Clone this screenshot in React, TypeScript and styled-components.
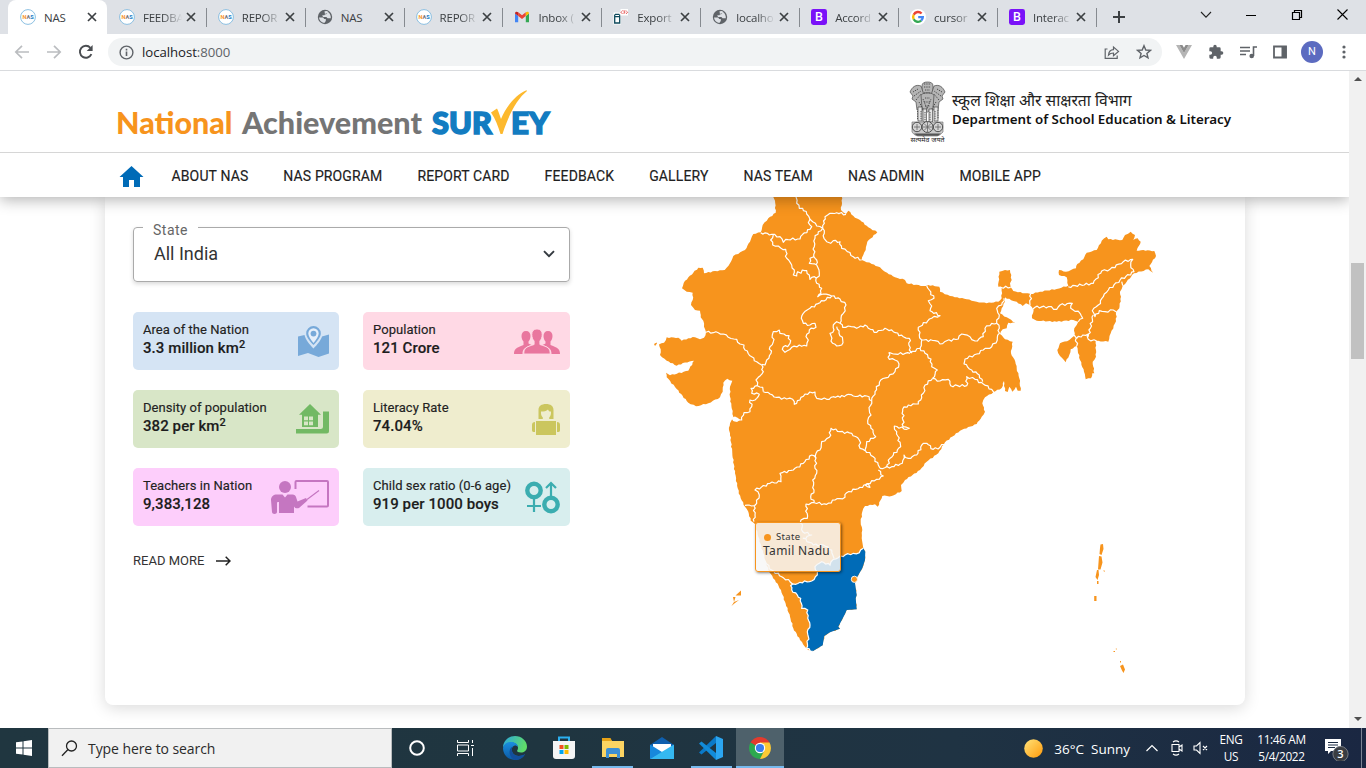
import React from "react";
import styled, { createGlobalStyle } from "styled-components";

const GlobalStyle = createGlobalStyle`
  * { box-sizing: border-box; }
  body { margin: 0; width: 1366px; height: 768px; overflow: hidden; background: #fff; font-family: Roboto, "Liberation Sans", sans-serif; }
  svg { display: block; flex: none; }
`;

const ORANGE = "#f7941d";
const BLUE = "#006bb7";

const Screen = styled.div`
  display: flex;
  flex-direction: column;
  width: 1366px;
  height: 768px;
`;

/* ---------- browser chrome ---------- */

const TabStrip = styled.div`
  display: flex;
  height: 34px;
  padding-left: 8px;
  background: #dee1e6;
  font-family: "Open Sans", "Noto Sans", sans-serif;
`;

const Tab = styled.div<{ $active?: boolean; $line?: boolean }>`
  position: relative;
  display: flex;
  align-items: center;
  width: 98.9px;
  height: 34px;
  padding: 0 10px 0 12px;
  border-radius: 8px 8px 0 0;
  background: ${(p) => (p.$active ? "#fff" : "transparent")};
  &::after {
    content: "";
    position: absolute;
    right: -1px;
    top: 8px;
    width: 1px;
    height: 19px;
    background: ${(p) => (p.$line ? "#868a90" : "transparent")};
  }
`;

const TabTitle = styled.span<{ $fade?: boolean }>`
  flex: 1;
  margin: 0 3px 0 8px;
  overflow: hidden;
  white-space: nowrap;
  font-size: 11.5px;
  letter-spacing: -0.2px;
  color: #3c4043;
  ${(p) => p.$fade && "-webkit-mask-image: linear-gradient(90deg, #000 50%, transparent 98%);"}
`;

const WindowButtons = styled.div`
  display: flex;
  align-items: center;
  margin-left: auto;
  padding-right: 18px;
  gap: 34px;
  height: 29px;
`;

const NewTab = styled.div`
  display: flex;
  align-items: center;
  padding-left: 17px;
`;

const Toolbar = styled.div`
  display: flex;
  align-items: center;
  height: 37px;
  padding: 0 15px 0 14px;
  border-bottom: 1px solid #d9dbde;
  background: #fff;
`;

const NavIcons = styled.div`
  display: flex;
  align-items: center;
  gap: 16px;
  width: 94px;
`;

const AddressBar = styled.div`
  display: flex;
  align-items: center;
  width: 1054px;
  height: 28px;
  padding: 0 10px 0 11px;
  border-radius: 14px;
  background: #f1f3f4;
`;

const Url = styled.span`
  flex: 1;
  margin-left: 8px;
  font-family: "Open Sans", "Noto Sans", sans-serif;
  font-size: 13.2px;
  letter-spacing: -0.05px;
  color: #202124;
  span { color: #5f6368; }
`;

const Extensions = styled.div`
  display: flex;
  align-items: center;
  margin-left: auto;
  gap: 16px;
`;

const Avatar = styled.div`
  width: 22px;
  height: 22px;
  margin: 0 -2px 0 -2px;
  border-radius: 50%;
  background: #5c6bc0;
  color: #fff;
  font-size: 11px;
  line-height: 22px;
  text-align: center;
`;

/* ---------- page ---------- */

const Viewport = styled.div`
  display: flex;
  height: 657px;
`;

const Page = styled.div`
  display: flex;
  flex-direction: column;
  width: 1349px;
  overflow: hidden;
`;

const Scrollbar = styled.div`
  display: flex;
  flex-direction: column;
  align-items: center;
  justify-content: space-between;
  width: 17px;
  padding: 6px 0 7px;
  background: #f1f1f1;
`;

const Thumb = styled.div`
  width: 13px;
  height: 96px;
  margin-bottom: 176px;
  background: #c1c1c1;
`;

const Arrow = styled.div<{ $down?: boolean }>`
  border: 4px solid transparent;
  border-${(p) => (p.$down ? "top" : "bottom")}: 4px solid #505050;
  border-${(p) => (p.$down ? "bottom" : "top")}: 0;
`;

const Header = styled.header`
  position: relative;
  z-index: 1;
  height: 126px;
  background: #fff;
  box-shadow: 0 3px 14px rgba(0, 0, 0, 0.3);
`;

const Brand = styled.div`
  display: flex;
  justify-content: space-between;
  height: 82px;
  padding: 0 117px 0 110px;
  border-bottom: 1px solid #d6d6d6;
`;

const Department = styled.div`
  display: flex;
  gap: 6px;
  padding-top: 10px;
`;

const DeptText = styled.div`
  width: 280px;
  padding-top: 9px;
  color: #111;
  white-space: nowrap;
`;

const Hindi = styled.div`
  height: 20px;
  font-family: "Noto Sans Devanagari", "Noto Sans", sans-serif;
  font-size: 15.7px;
  line-height: 24px;
  color: #222;
`;

const English = styled.div`
  font-family: "Noto Sans", "Open Sans", sans-serif;
  font-size: 13.35px;
  font-weight: 600;
  line-height: 19px;
`;

const Menu = styled.nav`
  display: flex;
  align-items: center;
  gap: 35px;
  height: 44px;
  padding: 2px 0 0 119px;
`;

const MenuItem = styled.span`
  font-size: 14px;
  font-weight: 400;
  letter-spacing: 0.13px;
  color: #212121;
  -webkit-text-stroke: 0.15px #212121;
  white-space: nowrap;
`;

const HomeIcon = styled.svg`
  margin-right: -7.5px;
`;

const Card = styled.main`
  display: flex;
  width: 1140px;
  height: 508px;
  margin-left: 105px;
  border-radius: 0 0 8px 8px;
  background: #fff;
  box-shadow: 0 3px 16px rgba(0, 0, 0, 0.15);
`;

const Facts = styled.section`
  width: 465px;
  padding: 30px 0 0 28px;
`;

const Select = styled.div`
  position: relative;
  display: flex;
  align-items: center;
  justify-content: space-between;
  height: 55px;
  padding: 0 14px 2px 20px;
  border: 1px solid #aaa;
  border-radius: 4px;
  box-shadow: 0 2px 4px rgba(0, 0, 0, 0.15);
  color: #333;
  font-size: 18px;
`;

const SelectLabel = styled.span`
  position: absolute;
  left: 9px;
  top: -7px;
  padding: 0 10px;
  background: #fff;
  color: #666;
  font-size: 14px;
  line-height: 18px;
  letter-spacing: 0.5px;
`;

const FactGrid = styled.div`
  display: grid;
  grid-template-columns: 206px 207px;
  grid-auto-rows: 58px;
  gap: 20px 24px;
  margin-top: 30px;
`;

const Fact = styled.div<{ $bg: string }>`
  display: flex;
  align-items: center;
  justify-content: space-between;
  padding: 0 10px;
  border-radius: 5px;
  background: ${(p) => p.$bg};
`;

const FactText = styled.div`
  padding-bottom: 3px;
  white-space: nowrap;
  color: #1d1d1d;
`;

const FactName = styled.div`
  font-size: 13px;
  letter-spacing: 0.05px;
  line-height: 18px;
  color: #222;
  -webkit-text-stroke: 0.15px #222;
`;

const FactValue = styled.div`
  font-size: 15px;
  font-weight: 500;
  letter-spacing: 0.08px;
  line-height: 19px;
  -webkit-text-stroke: 0.15px #1d1d1d;
  sup { font-size: 11px; line-height: 0; vertical-align: 5px; }
`;

const ReadMore = styled.div`
  display: flex;
  align-items: center;
  gap: 12px;
  margin-top: 26px;
  font-size: 13px;
  line-height: 18px;
  color: #333;
`;

const MapPanel = styled.section`
  position: relative;
  flex: 1;
  padding-left: 70px;
`;

const Tooltip = styled.div`
  position: absolute;
  left: 185px;
  top: 325px;
  width: 86px;
  height: 50px;
  padding: 7px 7px;
  border: 1px solid ${ORANGE};
  border-radius: 3px;
  background: rgba(247, 247, 247, 0.85);
  box-shadow: 1px 1px 3px rgba(0, 0, 0, 0.5);
  color: #333;
  font-family: "Noto Sans", "Open Sans", sans-serif;
  font-size: 12px;
  letter-spacing: 0.35px;
  line-height: 14px;
  white-space: nowrap;
`;

const TooltipHead = styled.div`
  display: flex;
  align-items: center;
  gap: 5px;
  padding-left: 1px;
  font-size: 9.5px;
  &::before {
    content: "";
    width: 7px;
    height: 7px;
    border-radius: 50%;
    background: ${ORANGE};
  }
`;

/* ---------- taskbar ---------- */

const Taskbar = styled.footer`
  display: flex;
  height: 40px;
  background: linear-gradient(90deg, #203640 0%, #1f3540 40%, #1f3343 70%, #1a2742 100%);
  color: #fff;
  font-family: "Open Sans", "Noto Sans", sans-serif;
`;

const StartButton = styled.div`
  display: grid;
  place-items: center;
  width: 48px;
`;

const SearchBox = styled.div`
  display: flex;
  align-items: center;
  gap: 10px;
  width: 344px;
  padding-left: 12px;
  border: 1px solid #b9bcbe;
  background: #f1f1f1;
  color: #2b2b2b;
  font-size: 14px;
  letter-spacing: -0.08px;
`;

const TaskButton = styled.div<{ $open?: boolean; $current?: boolean }>`
  position: relative;
  display: grid;
  place-items: center;
  width: ${(p) => (p.$current ? 48 : 49.1)}px;
  background: ${(p) => (p.$current ? "#4e616b" : "transparent")};
  &::after {
    content: "";
    position: absolute;
    bottom: 0;
    left: ${(p) => (p.$current ? 0 : 4)}px;
    right: ${(p) => (p.$current ? 0 : 4)}px;
    height: 2px;
    background: ${(p) => (p.$open ? "#76b9ed" : "transparent")};
  }
`;

const Tray = styled.div`
  display: flex;
  align-items: center;
  margin-left: auto;
  padding-right: 4px;
`;

const Weather = styled.span`
  margin: 2px 16px 0 11px;
  font-size: 13.5px;
  white-space: pre;
`;

const TrayStack = styled.div<{ $w: number }>`
  width: ${(p) => p.$w}px;
  font-size: 11.8px;
  letter-spacing: -0.35px;
  line-height: 17px;
  text-align: center;
  white-space: nowrap;
`;

const ShowDesktop = styled.div`
  width: 1px;
  height: 40px;
  margin-left: 10px;
  background: #7b8494;
`;

/* ---------- small icons ---------- */

type Kind = "nas" | "globe" | "gmail" | "export" | "boot" | "google";

const Favicon = ({ kind }: { kind: Kind }) => {
  if (kind === "nas")
    return (
      <svg width="16" height="16" viewBox="0 0 16 16">
        <circle cx="8" cy="8" r="7.4" fill="#fff" stroke="#7fb9df" strokeWidth=".9" />
        <text x="2.4" y="10" fontSize="5.6" fontWeight="700" fontFamily="Roboto, sans-serif">
          <tspan fill={ORANGE}>N</tspan><tspan fill="#777">A</tspan><tspan fill="#1479c4">S</tspan>
        </text>
      </svg>
    );
  if (kind === "globe")
    return (
      <svg width="16" height="16" viewBox="0 0 16 16">
        <circle cx="8" cy="8" r="7.2" fill="#5f6368" />
        <path d="M2 8.5h4.2l1 1.6h1.6v1.8L7.3 14C4 13.6 2.2 11 2 8.5ZM7.5 2.2 10 1.9l1.3 1-1 1.6H8.6L7.4 6.2H5.2L6 8h3.4l1.2 1.2h3.2c.4-3-1.4-5.2-2.5-6L9.8 5 8 5.4Z" fill="#dee1e6" />
      </svg>
    );
  if (kind === "gmail")
    return (
      <svg width="16" height="16" viewBox="0 0 16 16">
        <path d="M1 13.2V4.6l3.2 2.4v6.2Z" fill="#4285f4" />
        <path d="M11.8 13.2V7L15 4.6v8.6Z" fill="#34a853" />
        <path d="M4.2 7V3.3L8 6.2l3.8-2.9V7L8 9.9Z" fill="#ea4335" />
        <path d="M1 4.6C1 2.8 2.6 2.2 4.2 3.3V7Z" fill="#c5221f" />
        <path d="M15 4.6c0-1.8-1.6-2.4-3.2-1.3V7Z" fill="#fbbc04" />
      </svg>
    );
  if (kind === "export")
    return (
      <svg width="16" height="16" viewBox="0 0 16 16">
        <path d="M.5 3.5h7.500v12h-7.500Z" fill="#fff" />
        <path d="M2 5.300h4.400M2 7.700h4.400M1.700 5.500v8.500h5V5.500" fill="none" stroke="#0e4a5c" strokeWidth="1.300" />
        <path d="M7.500 0h7.500v6.500H7.500Z" fill="#fff" />
        <path d="M9.500 1.600 8 3.300 9.500 5M13 1.600 14.500 3.300 13 5M10.500 2h1.300v1.600h-.8v1.600" fill="none" stroke="#d22" strokeWidth="1" strokeDasharray="1.200 .6" />
      </svg>
    );
  if (kind === "boot")
    return (
      <svg width="16" height="16" viewBox="0 0 16 16">
        <rect width="16" height="16" rx="2.4" fill="#7a12f8" />
        <text x="8" y="12.3" textAnchor="middle" fontSize="12.5" fontWeight="500" fill="#fff" fontFamily="Roboto, sans-serif">B</text>
      </svg>
    );
  return (
    <svg width="16" height="16" viewBox="0 0 16 16">
      <circle cx="8" cy="8" r="8" fill="#fff" />
      <g fill="none" strokeWidth="2.4">
        <path d="M11.6 4.5A4.9 4.9 0 0 0 3.7 5.7" stroke="#ea4335" />
        <path d="M3.7 5.7a4.9 4.9 0 0 0 0 4.6" stroke="#fbbc05" />
        <path d="M3.7 10.3a4.9 4.9 0 0 0 7.5 1.4" stroke="#34a853" />
        <path d="M11.2 11.7A4.9 4.9 0 0 0 12.8 8.1H8.2" stroke="#4285f4" />
      </g>
    </svg>
  );
};

const Close = () => (
  <svg width="10" height="10" viewBox="0 0 10 10">
    <path d="M1 1l8 8M9 1 1 9" stroke="#3c4043" strokeWidth="1.7" />
  </svg>
);

const tabs: { kind: Kind; title: string; fade?: boolean }[] = [
  { kind: "nas", title: "NAS" },
  { kind: "nas", title: "FEEDBA", fade: true },
  { kind: "nas", title: "REPOR", fade: true },
  { kind: "globe", title: "NAS" },
  { kind: "nas", title: "REPOR", fade: true },
  { kind: "gmail", title: "Inbox (", fade: true },
  { kind: "export", title: "Export", fade: true },
  { kind: "globe", title: "localho", fade: true },
  { kind: "boot", title: "Accord", fade: true },
  { kind: "google", title: "cursor", fade: true },
  { kind: "boot", title: "Interac", fade: true },
];

const Browser = () => (
  <>
    <TabStrip>
      {tabs.map((t, i) => (
        <Tab key={i} $active={i === 0} $line={i > 0}>
          <Favicon kind={t.kind} />
          <TabTitle $fade={t.fade}>{t.title}</TabTitle>
          <Close />
        </Tab>
      ))}
      <NewTab>
        <svg width="12" height="12" viewBox="0 0 12 12"><path d="M6 0v12M0 6h12" stroke="#3c4043" strokeWidth="2" /></svg>
      </NewTab>
      <WindowButtons>
        <svg width="12" height="10" viewBox="0 0 12 10"><path d="m1 2 5 5.2L11 2" fill="none" stroke="#222" strokeWidth="1.1" /></svg>
        <svg width="11" height="10" viewBox="0 0 11 10"><path d="M0 5.5h10" stroke="#000" /></svg>
        <svg width="12" height="12" viewBox="0 0 12 12"><path d="M1.5 3.5h7v7h-7ZM3.5 3.5v-2h7v7h-2" fill="none" stroke="#000" strokeWidth="1.2" /></svg>
        <svg width="11" height="11" viewBox="0 0 11 11"><path d="m.5.5 10 10m0-10-10 10" stroke="#000" strokeWidth="1.1" /></svg>
      </WindowButtons>
    </TabStrip>
    <Toolbar>
      <NavIcons>
        <svg width="16" height="16" viewBox="0 0 16 16"><path d="M15 8H2M8 1.8 1.8 8 8 14.2" fill="none" stroke="#bbbdc0" strokeWidth="1.7" /></svg>
        <svg width="16" height="16" viewBox="0 0 16 16"><path d="M1 8h13M8 1.8 14.2 8 8 14.2" fill="none" stroke="#bbbdc0" strokeWidth="1.7" /></svg>
        <svg width="16" height="16" viewBox="0 0 16 16"><path d="M13.4 10.2A6 6 0 1 1 12.4 3.8" fill="none" stroke="#4a4d51" strokeWidth="1.9" /><path d="M14.6 1v6H8.7Z" fill="#4a4d51" /></svg>
      </NavIcons>
      <AddressBar>
        <svg width="15" height="15" viewBox="0 0 15 15"><circle cx="7.5" cy="7.5" r="6.4" fill="none" stroke="#5f6368" strokeWidth="1.4" /><path d="M7.5 6.6v4.4M7.5 3.8v1.6" stroke="#5f6368" strokeWidth="1.6" /></svg>
        <Url>localhost<span>:8000</span></Url>
        <svg width="16" height="16" viewBox="0 0 16 16"><path d="M3.5 5H1.200v9.300h12V11.500M4.500 11c.4-3.600 2.300-5.200 5-5.300V3l5 4.400-5 4.200V9c-2.200 0-3.700.6-5 2Z" fill="none" stroke="#5f6368" strokeWidth="1.200" /></svg>
        <svg width="16" height="16" viewBox="0 0 16 16" style={{ marginLeft: 16 }}><path d="m8 1.700 1.800 4.300 4.600.4-3.500 3 1.100 4.500L8 11.500l-4 2.400 1.100-4.500-3.500-3 4.600-.4Z" fill="none" stroke="#5f6368" strokeWidth="1.400" /></svg>
      </AddressBar>
      <Extensions>
        <svg width="16" height="14" viewBox="0 0 16 14"><path d="M0 0h3.400L8 8l4.600-8H16L8 14Z" fill="#b5b5b5" /><path d="M3.400 0h3L8 2.800 9.600 0h3L8 8Z" fill="#8b8b8b" /></svg>
        <svg width="16" height="16" viewBox="0 0 24 24"><path d="M20.5 11H19V7a2 2 0 0 0-2-2h-4V3.500a2.500 2.500 0 0 0-5 0V5H4a2 2 0 0 0-2 2v3.800h1.500a2.700 2.700 0 0 1 0 5.400H2V20a2 2 0 0 0 2 2h3.800v-1.500a2.700 2.700 0 0 1 5.400 0V22H17a2 2 0 0 0 2-2v-4h1.500a2.500 2.500 0 0 0 0-5Z" fill="#5f6368" /></svg>
        <svg width="17" height="14" viewBox="0 0 17 14"><path d="M0 2.500h10M0 6h10M0 9.500h6M13.500 11V2H17" fill="none" stroke="#5f6368" strokeWidth="1.600" /><circle cx="11.700" cy="11" r="2.300" fill="#5f6368" /></svg>
        <svg width="14" height="14" viewBox="0 0 14 14"><path d="M1 1.500h12v11H1Z" fill="#fff" stroke="#5f6368" strokeWidth="1.800" /><path d="M8.500 1h5v12h-5Z" fill="#5f6368" /></svg>
        <Avatar>N</Avatar>
        <svg width="4" height="14" viewBox="0 0 4 14" style={{ marginRight: 5, marginLeft: 5 }}><g fill="#5f6368"><circle cx="2" cy="2" r="1.600" /><circle cx="2" cy="7" r="1.600" /><circle cx="2" cy="12" r="1.600" /></g></svg>
      </Extensions>
    </Toolbar>
  </>
);

/* ---------- header art ---------- */

const Logo = () => (
  <svg width="445" height="81" viewBox="110 71 445 81" fontFamily="Lato, sans-serif" fontWeight="900">
    <text x="116" y="134" fontSize="30" textLength="116.500" lengthAdjust="spacingAndGlyphs" fill={ORANGE}>National</text>
    <text x="242" y="134" fontSize="30" textLength="180" lengthAdjust="spacingAndGlyphs" fill="#757575">Achievement</text>
    <g fontSize="29.500" fill="#137cc1" stroke="#137cc1" strokeWidth="1.500">
      <text x="432" y="133.800" textLength="60" lengthAdjust="spacingAndGlyphs">SUR</text>
      <text x="511" y="133.800" textLength="38.500" lengthAdjust="spacingAndGlyphs">EY</text>
    </g>
    <path d="M491 112.500 497 108.500C498.500 111.500 499.500 114.500 501 119 506 107 515 95 526.500 90.200L527 91C517 99 509 114 502.500 134H500.500C498 126 495.500 119 491 112.500Z" fill="#fdb92e" />
  </svg>
);

const Emblem = () => (
  <svg width="37" height="64" viewBox="0 0 37 64">
    <g fill="#b5b5b5" stroke="#4a4a4a" strokeWidth=".7">
      <path d="M13 5c0-3 2-4 5.500-4S24 2 24 5v6c0 3-2 5-5.500 5S13 14 13 11Z" />
      <path d="M12 5C7 3 3 6 1 11l3 4-1 3 4 3 1 8h6l1-15Z" />
      <path d="M25 5c5-2 9 1 11 6l-3 4 1 3-4 3-1 8h-6l-1-15Z" />
      <path d="M12 14c3-3 10-3 13 0l-1 13-5.500 4L13 27Z" />
      <path d="M9 26h4v14H9ZM14 28h3.500v13H14ZM20 28h3.500v13H20ZM25 26h4v14h-4Z" fill="#e4e4e4" />
    </g>
    <g fill="none" stroke="#444" strokeWidth=".9" strokeDasharray="1.300 1">
      <path d="M15 3h7M15 6h7M16 9h5M15 12h7M4 11l5-3M5 15l7-5M7 19l5-6M33 11l-5-3M32 15l-7-5M30 19l-5-6M10 21l3 5M27 21l-3 5M14 18l4 10 4-10M16 17h5M15 21h7M16 25h5" />
      <path d="M8.500 30v9M12 30v9M16 31v9M21 31v9M26 30v9M29 29v9" />
    </g>
    <path d="M3 41h31v10c-3 3-4 3.500-6 4H9c-2-.5-4-1-6-4Z" fill="#c9c9c9" stroke="#666" strokeWidth=".6" />
    <g fill="#d4d4d4" stroke="#4f4f4f" strokeWidth="1">
      <circle cx="8" cy="46" r="4.700" /><circle cx="29" cy="46" r="4.700" /><circle cx="18.500" cy="46" r="5.500" />
    </g>
    <g fill="none" stroke="#666" strokeWidth=".8">
      <path d="M13.500 46h10M18.500 41v10M15 42.500l7 7M22 42.500l-7 7M5 46h6M8 43v6M26 46h6M29 43v6" />
    </g>
    <path d="M5 52.500h27l-3 2.300H8Z" fill="#555" />
    <text x="1.500" y="61" fontSize="6.500" textLength="34" lengthAdjust="spacingAndGlyphs" fill="#222" fontFamily="'Noto Sans Devanagari', 'Noto Sans', sans-serif">सत्यमेव जयते</text>
  </svg>
);

const menu = ["ABOUT NAS", "NAS PROGRAM", "REPORT CARD", "FEEDBACK", "GALLERY", "NAS TEAM", "NAS ADMIN", "MOBILE APP"];

/* ---------- fact icons ---------- */

const MapIcon = () => (
  <svg width="31" height="31" viewBox="0 0 31 31" fill="#77a9d9">
    <path d="M0 10.500 6.500 9c1 4.500 5 9.500 9 13.500C19 19 23 14 24 10.500L31 8.500v19L20.500 31 10 27 0 30Z" />
    <path d="M15.500 0a7.300 7.300 0 0 0-7.300 7.400C8.200 11 12 15.500 15.500 19c3.500-3.500 7.300-8 7.300-11.600A7.300 7.300 0 0 0 15.500 0Z" />
    <path d="M15.500 2.300a5.200 5.200 0 0 0-5.200 5.200c0 2.500 2.500 6 5.200 9.600 2.700-3.600 5.200-7.100 5.200-9.600a5.200 5.200 0 0 0-5.200-5.200Z" fill="#e6effa" />
    <circle cx="15.500" cy="7.600" r="2.900" />
  </svg>
);

const PeopleIcon = () => (
  <svg width="46" height="25" viewBox="0 0 46 25" fill="#e9769e">
    <path d="M12 2c3 0 4.500 2 4.500 5 0 2.500-.9 4.300-2 5.500v2l3 1.500C11 18 8.500 20 8.500 25H0c0-5 2-6 9.500-9v-3.500C8.400 11.300 7.500 9.500 7.500 7c0-3 1.500-5 4.500-5Z" />
    <path d="M34 2c-3 0-4.500 2-4.500 5 0 2.500.9 4.300 2 5.500v2l-3 1.500C35 18 37.500 20 37.500 25H46c0-5-2-6-9.500-9v-3.500c1.100-1.200 2-3 2-5.500 0-3-1.500-5-4.500-5Z" />
    <path d="M23 0c3.500 0 5.200 2.300 5.200 5.500 0 3-1 5-2.300 6.500v3.500c8 2.500 10.300 3.500 10.300 9.500H9.800c0-6 2.300-7 10.300-9.500V12c-1.300-1.500-2.300-3.500-2.300-6.500C17.800 2.300 19.500 0 23 0Z" stroke="#ffd9e5" strokeWidth=".9" />
  </svg>
);

const HouseIcon = () => (
  <svg width="33" height="30" viewBox="0 0 33 30" fill="#72b964">
    <path fillRule="evenodd" d="M14 0 25 10.800h-3V23H6V10.800H3ZM8 12.500v3.800h4v-3.800Zm5 0v3.800h4v-3.800Zm-5 4.900v3.800h4v-3.800Zm5 0v3.800h4v-3.800Z" />
    <path d="M27 7.500h6V27a2.500 2.500 0 0 1-2.500 2.500H0V25h24.500a2.500 2.500 0 0 0 2.500-2.500Z" />
  </svg>
);

const ReaderIcon = () => (
  <svg width="28" height="31" viewBox="0 0 28 31" fill="#cbc65e">
    <path d="M6.500 15V6C6.500 2 9.500 0 14 0s7.500 2 7.500 6v9h-4.300v-1.500c1.600-1.500 2-4 1.800-6-1.500.3-2.500-.5-3-2-1.700 1.700-4 2-7 2-.2 2.500.3 4.500 1.800 6V15Z" />
    <path d="M4 17h20v14H4Z" />
    <path d="M3 18v10H1.500C.5 28 0 27 0 26v-5c0-2 1-3 3-3ZM25 18v10h1.500c1 0 1.500-1 1.500-2v-5c0-2-1-3-3-3Z" />
  </svg>
);

const TeacherIcon = () => (
  <svg width="58" height="34" viewBox="0 0 58 34" fill="#c576c1">
    <path d="M24.500 9V2a1 1 0 0 1 1-1H56a1 1 0 0 1 1 1v23.500a1 1 0 0 1-1 1H36.500" fill="none" stroke="#c576c1" strokeWidth="2" />
    <path d="M36 19.500 48 10.500" stroke="#c576c1" strokeWidth="1.200" />
    <circle cx="14" cy="7" r="6" />
    <path d="M6 14.500h5.500l2.500 3 2.500-3h5c2 0 3 1 3.500 2.500l1.500 4.500 8.500-3.500 1.500 2.500-8.500 7.500c-2 .8-4 .3-5-1.500V33H8V22H6.800l-.8.5V32c0 2.500-5 2.500-5 0L0 20c0-3.500 2.500-5.500 6-5.500Z" />
  </svg>
);

const GenderIcon = () => (
  <svg width="35" height="33" viewBox="0 0 35 33" fill="none" stroke="#3badb0">
    <circle cx="9" cy="9.500" r="6.700" strokeWidth="4.400" />
    <path d="M9 18v13M2 25h14" strokeWidth="2.200" />
    <circle cx="26" cy="23.500" r="6.700" strokeWidth="4.400" />
    <path d="M26 15V2M21 7l5-5 5 5" strokeWidth="2.200" />
  </svg>
);

const facts: { name: string; value: React.ReactNode; bg: string; icon: React.ReactNode }[] = [
  { name: "Area of the Nation", value: <>3.3 million km<sup>2</sup></>, bg: "#d5e4f4", icon: <MapIcon /> },
  { name: "Population", value: "121 Crore", bg: "#ffd9e5", icon: <PeopleIcon /> },
  { name: "Density of population", value: <>382 per km<sup>2</sup></>, bg: "#d8e6c7", icon: <HouseIcon /> },
  { name: "Literacy Rate", value: "74.04%", bg: "#efedce", icon: <ReaderIcon /> },
  { name: "Teachers in Nation", value: "9,383,128", bg: "#fdcefb", icon: <TeacherIcon /> },
  { name: "Child sex ratio (0-6 age)", value: "919 per 1000 boys", bg: "#d8eeee", icon: <GenderIcon /> },
];

/* ---------- map ---------- */

// Breaks every long segment with small alternating offsets so that borders look surveyed, not ruled.
const rough = (points: string, amp = 1.1): string => {
  const p = points.trim().split(/\s+/).map((s) => s.split(",").map(Number));
  const out: string[] = [];
  for (let i = 0; i < p.length - 1; i++) {
    const [x1, y1] = p[i];
    const [x2, y2] = p[i + 1];
    const len = Math.hypot(x2 - x1, y2 - y1);
    out.push(`${x1},${y1}`);
    const n = Math.floor(len / 2.2);
    for (let k = 1; k < n; k++) {
      const t = k / n;
      const o = Math.sin(x1 * 12.99 + y1 * 78.2 + k * 2.3) * amp;
      out.push(`${(x1 + (x2 - x1) * t - ((y2 - y1) / len) * o).toFixed(1)},${(y1 + (y2 - y1) * t + ((x2 - x1) / len) * o).toFixed(1)}`);
    }
  }
  out.push(p[p.length - 1].join(","));
  return out.join(" ");
};

const westCoast = `773.3,190 773.3,197 775,200.7 775.7,212.7 768.3,218.3 762.7,225 760.7,232.3 753.3,234 750,241.7 745,250 733.3,256 730,263.3 724.7,270 715,271 704,273.3 702.7,267.7 698.3,267.7 693.3,272.7 685,280.7 682,288.3 686.7,291.7 692.7,292.7 692.7,300 691,305 695,310 700,310.7 700.7,317.3 703.3,320.7 704,326.7 706,332.3 704,337.7 700,339.3 695,337.3 688.3,338.3 681.7,340.7 678.3,337.7 666.7,337.3 664,342.7 659,344.5 660.7,349.3 660,355 666.7,360.7 676.7,365.7 685,362.5 694,360.7 688.3,370.7 670,375.3 666,372.7 666.7,377.3 676.7,389 688.3,402.7 696,406.3 708.3,403.3 720,397.3 722.7,391.7 723.3,382.7 727.3,378.7 732.3,380.7 730,386.7 730,396.7 731.7,408.3 733.3,416.7 731.7,420 730,423.3 729,430 730,433.3 732.3,453.3 735,473.3 737.7,488.3 740.7,498.3 745,506.7 748.3,511.7 750.7,520.7 755,524 758.3,536.7 763.3,553.3 769,571.7 775,580 781,590 785,601.7 790,616.7 793.3,628.3 800,640 805,646.7 808.3,650`;

const tnCoast = `812.7,651.3 822.7,645.3 824.3,636 830,632.3 840,628.7 838.3,626.7 845,614 846.7,610 856.7,609.3 855.7,598.3 856.7,595 855,583.3 857.3,576.7 862.3,568.3 865,560 865.3,551.7 863.3,548.3`;

const eastAndNorth = `861.7,538.3 862.3,530 860.7,521.7 862.3,511.7 865,506 875,504.3 877.7,506.7 882.3,496 891.7,496 901.7,491 901,485 905,480 920,470 926.7,461.7 938.3,453.3 945,442.3 960,430.7 976.7,424 981.7,416.7 985,411.7 982.3,403.3 985,397.3 993.3,392.3 1001.7,388 1004,381 1005,391 1007.7,392 1009.3,386.7 1012.3,391.7 1016,386.7 1017.7,390.7 1020.7,390.7 1019.3,378.3 1016.7,368.3 1015.3,361.7 1011,353.3 1012.7,341.7 1005,339.3 1000,334 1002.7,329.3 1006.7,328.3 1008.3,322.7 1015.3,322.7 1006.7,317.3 1000,313.3 1001.7,308.3 1005,301.7 1005,297.3 1013.3,301 1016.7,301.7 1022.7,306 1026,303.3 1030,305 1033.3,310 1032,318.3 1036.7,320.7 1056.7,321.7 1073.3,320 1078.3,321.7 1076.7,325 1074.3,328.3 1074.3,335.7 1069.3,340 1060,343.3 1057.3,350 1060,356 1065.7,362.3 1069.3,355 1070.7,349.3 1076.7,346 1080,360 1084,371.7 1085.7,379.3 1091,378.3 1092.3,373.3 1094.3,373.3 1092.7,361.7 1096,356.7 1095.7,341 1108.3,341.7 1110.7,333.3 1115,323.3 1116.7,316.7 1116,311.7 1119.3,308.3 1121,296.7 1120,291.7 1122.7,285.7 1126.7,281.7 1134,273.3 1148.3,269.3 1153.3,272.7 1149.3,266 1156,256 1154.3,251 1143.3,250 1136.7,250.7 1140.7,241.7 1137.7,238.3 1133.3,240 1135,235 1130.7,231.7 1125,235 1122.3,240 1108.3,239.3 1106.7,236.7 1101.7,240.7 1096.7,250 1086.7,252.7 1083.3,259.3 1077.3,264 1076,268.3 1066,271.7 1059,270 1059,275 1066.7,277.3 1068.3,285.7 1056.7,289 1040,291.7 1030.7,294 1025,293.3 1013.3,291 1010.7,287.3 1010,283.3 1011.7,280 1010,270 1005,270 999.3,271.7 998.3,286.7 1001.7,288.3 1001.7,298.3 998.3,301.7 986.7,303.3 976.7,301.7 966.7,299.3 957.3,297.3 950,296 940,291.7 939.3,286.7 928.3,285 923.3,286 906.7,283.3 905,280 895,277.3 885,271.7 880,267.3 871.7,264 861.7,260 863.3,255 865.7,250 867.3,241.7 877.3,232.3 868.3,227.3 860,220 855,217.7 848.3,210.7 846,214 841,210 842.3,198.3 841,190`;

const tnInland = `863.3,548.3 859.3,552.7 853.3,553.3 845,555 838.3,557.7 833.3,559.3 830,565 821.7,561.7 815,566.7 817.3,575 811.7,581 800,582.3 790.7,585.7 791.7,590 800.7,598.3 801.7,608.3 807.7,610 807.7,618.3 810,625 807.3,631.7 808.3,636.7 806.7,648.3 812.7,651.3`;

const borders = [
  "796,197 796.7,203.3 799.3,208.3 802.7,208.3 806.7,214 810,219.3 812.7,221.7 816.7,226 822.7,228.3",
  "822.7,228.3 824.3,223.3 825,216.7 830,213.3 836.7,212.7 846,214.3",
  "760.7,232.7 771.7,234.3 780,236.7 783.3,242.3 785.7,239.3 800,239 802.7,234.3 810,229.3 811.7,226.7 808.3,222.7 810,219.3",
  "773.3,235 770.7,240 772.7,245 778.3,246 781,248.3 785.7,249.3 786.7,258.3 791.7,265 794.3,270 793.3,275 796.7,276 797.7,271.7 801,273.3 802.3,270 806.7,270.7 809.3,275 810,279.3 811.7,277.3 816.7,278.3",
  "822.7,228.3 818.3,231.7 815,238.3 814.3,246.7 813.7,256.7 810,258.3 809.3,263.3 816.7,265 819,270 819.3,276 816,278.3",
  "813.7,256.7 816.7,260 816,264.7",
  "822.7,228.3 824.3,233.3 824,238.3 826.7,241.7 830.7,243.3 833.3,240.7 840,241.7 841.7,248.3 847.3,251.7 853.3,256.7 861.7,260",
  "816,278.3 816.7,283.3 821.7,288.3 821,293.3 817.7,296.7 823.3,294 831.7,296 840,299 846,305 843.3,313.3 841,318.3 840,323.3",
  "831.7,296 820,302.7 810,308.3 803.3,313.3 801.3,318.3 803.3,323.3 810,325 815,323.3 816,327.3 809.3,330 806,336.7 808.3,340 806.7,346 799.3,345 791.7,347.3 785,352.3 782.3,349.3 783.3,346.7 787.7,346.7 790,343.3 789,335.7 784,334 780,333.3 779.3,330 773.3,331.7 772.3,335 773.3,341.7 770,346.7 771,353.3 766.7,360 765,365 761.7,364.3",
  "706,332.3 718.3,332.7 723.3,334 728.3,337.3 736.7,339.3 740,344 744,345 745,350 751.7,356.7 756.7,361.7 761.7,365",
  "761.7,365 763.3,371.7 758.3,377.3 756,380 757.3,385.7 762.7,387.3 763.3,391.7",
  "757.3,385.7 751,388.3 751.7,393.3 759.3,394.3 755,400 750,400 751.7,406.7 750,411.7 744,412.7 741.7,420 735,420.7 731.7,418.3",
  "763.3,391.7 770,394 776.7,397.3 786.7,399 792.7,399.3 794.3,404.3 800,400 805,394 815,392 816.7,398.3 826.7,399.3 833.3,396.7 840,397.3 848.3,394.3 853.3,396 866.7,396 871.7,400.7",
  "871.7,400.7 875,391.7 880.7,380 888.3,377.3 895,371.7 899,364 895,360 889.3,359.3 889,352.7 893.3,354 910,353.3",
  "840,323.3 842.7,327.3 848.3,326 856.7,328.3 865,325 868.3,328.3 876.7,332.3 885,328.3 893.3,331.7 903.3,336.7 909.3,338.3 909.3,350 912,353",
  "840,323.3 836.7,321.7 833.3,325 834,330 830,333.3 832.7,343.3 836.7,346 841.7,345 842.7,340 839,333.3 836.7,326.7",
  "926.7,285.7 929.3,290 934,298.3 928.3,300.7 931.7,306 930,310.7 940,315.7 931.7,318.3 918.3,327.3 919.3,335 921.7,340 920,348.3 910,352.7",
  "921.7,340 935,340.7 940,344 946.7,340.7 958.3,339 961.7,334 970,336.7 975,341 983.3,336.7 985,328.3 991.7,323.3 996.7,323.3",
  "1004,298.3 1001.7,305 996.7,308.3 999.3,315 996.7,320 996.7,323.3 999.3,328.3 997.3,340 991.7,346.7 983.3,350 976.7,354 965,359 964,364 971.7,370 979.3,375 982.7,381.7",
  "920,348.3 925,353.3 931,359 931.7,366.7 937.3,370 932.7,378.3",
  "932.7,378.3 940,381 948.3,379.3 950.7,385.7 966.7,385.7 966.7,376.7 975,379.3 983.3,384 991.7,389.3 994,392.7",
  "932.7,378.3 925,385 923.3,393.3 918.3,404 908.3,405 902.7,409 903.3,426.7 909.3,428.3 906.7,429.3 894.3,426 896.7,431.7 900.7,446.7 890,458.3 886.7,467.3",
  "871.7,400.7 869.3,410 871,415 867.7,420.7 871,428.3 875.7,436.7 866.7,441.7 865,450 873.3,456.7 878.3,465 880,468.3",
  "880,468.3 891.7,466.7 902.3,463.3 904,455 908.3,458.3 916.7,455 923.3,443.3 926.7,443.3 933.3,449.3 940,447.3 946.7,441.7",
  "865,450.7 860,448.3 859.3,440 851.7,433.3 840,431.7 831,428.3 829.3,437.3 821.7,441.7 820,450 816,453.3 816,458.3",
  "816,458.3 811.7,455 803.3,463.3 793.3,470 780,473.3 781,481.7 770,483.3 755,490 759.3,495 756.7,503.3 751.7,506 745,505.3",
  "754,506 755,515 754,521.7",
  "816,458.3 815,468.3 816.7,473.3 812.7,480 814,490 810.7,496.7 814.3,502.7",
  "814.3,502.7 826.7,504.3 835,500 845,497.3 846.7,492.7 860,487.3 868.3,484 870,487.3 865,485 876.7,479.3 883.3,476 878.3,470",
  "814.3,502.7 806,504 807.3,518.3 801,520 802.7,531.7 811.7,535 803.3,538.3 813.3,545 823.3,545 831.7,550 834,558.3",
  "763.3,560 771.7,570 781.7,576.7 790,581.7 792.7,584.3",
  "998.3,287.3 1010.7,287.3",
  "1030.7,294 1030,305",
  "1068.3,286.7 1093.3,283.3 1101.7,271 1110,269.3 1123.3,261.7 1132.7,259.3 1130.7,265 1134,271.7 1120,280",
  "1120,280 1108.3,290 1103.3,296.7 1098.3,305 1092.3,310.7 1095,316.7 1099.3,310.7 1105,311.7 1113.3,310 1116,311.7",
  "1093.3,315 1088.3,336.7",
  "1121.7,281.7 1122.7,285.7",
  "1032.7,311.7 1035,307.3 1048.3,306.7 1056.7,309.3 1060,305 1072.3,303.3 1070.7,308.3 1080,313.3 1082.7,318.3 1078.3,321.7",
  "1074,335 1076.7,338.3 1082.7,335 1088.3,334 1088.3,339.3 1096.7,341",
  "1076,338.3 1076.7,346",
];

const coast = [westCoast, tnCoast, eastAndNorth].map((s) => rough(s, 0.5)).join(" ");
const tamilNadu = `${tnCoast} ${rough(tnInland, 0.9)}`;

const IndiaMap = () => (
  <svg width="540" height="490" viewBox="640 197 540 490">
    <polygon points={coast} fill={ORANGE} />
    <g fill="none" stroke="#fff" strokeWidth="1.200" strokeLinejoin="round">
      {borders.map((b, i) => <polyline key={i} points={rough(b)} />)}
    </g>
    <path d="M732 417.500l3-1 3 1.500 2 2-3 2-4-1Z" fill="#fff" />
    <polygon points={tamilNadu} fill={BLUE} />
    <polyline points={rough(tnInland, 0.9)} fill="none" stroke="#fff" strokeWidth="1.200" />
    <circle cx="854.400" cy="579.300" r="3.100" fill={ORANGE} stroke="#fff" strokeWidth=".9" />
    <g fill={ORANGE}>
      <path d="M654 344l2.500-1.500.5 1-2 2.500ZM735.500 595.500 741 590.500v5ZM733 597h2.500l-1.500 5Zm-1.500 9 2.500-4 5-2-4 3ZM1100.500 544.500l2.500-.5.500 5-2 6-2-1 .5-6ZM1099 556l2.500.5 1 6-2 7h-2.500Zm-2 14h1.500l.5 5-1.500 5-2-3ZM1103.500 570l1.500 1-1 1ZM1097 581h1.500v3H1097ZM1094.200 596h2.300v5h-2.300ZM1115.500 649l1-.8.4 1.600ZM1113.500 651h1.500v1h-1.500ZM1120 661h1v1.500h-1ZM1120 666l3-1.500 2 5-1.500 3.500-1.500-2.500Z" />
    </g>
  </svg>
);

const SitePage = () => (
  <Page>
    <Header>
      <Brand>
        <Logo />
        <Department>
          <Emblem />
          <DeptText>
            <Hindi>स्कूल शिक्षा और साक्षरता विभाग</Hindi>
            <English>Department of School Education &amp; Literacy</English>
          </DeptText>
        </Department>
      </Brand>
      <Menu>
        <HomeIcon width="25" height="21" viewBox="0 0 24 21"><path d="M12 0 0 11h3.500v10h6v-7h5v7h6V11H24Z" fill={BLUE} /></HomeIcon>
        {menu.map((m) => <MenuItem key={m}>{m}</MenuItem>)}
      </Menu>
    </Header>
    <Card>
      <Facts>
        <Select>
          <SelectLabel>State</SelectLabel>
          All India
          <svg width="12" height="8" viewBox="0 0 12 8"><path d="m1 1.200 5 5 5-5" fill="none" stroke="#343a40" strokeWidth="1.900" /></svg>
        </Select>
        <FactGrid>
          {facts.map((f) => (
            <Fact key={f.name} $bg={f.bg}>
              <FactText>
                <FactName>{f.name}</FactName>
                <FactValue>{f.value}</FactValue>
              </FactText>
              {f.icon}
            </Fact>
          ))}
        </FactGrid>
        <ReadMore>
          READ MORE
          <svg width="15" height="10" viewBox="0 0 15 10"><path d="M0 5h14M9.700.7 14 5 9.700 9.300" fill="none" stroke="#222" strokeWidth="1.500" /></svg>
        </ReadMore>
      </Facts>
      <MapPanel>
        <IndiaMap />
        <Tooltip>
          <TooltipHead>State</TooltipHead>
          Tamil Nadu
        </Tooltip>
      </MapPanel>
    </Card>
  </Page>
);

/* ---------- taskbar icons ---------- */

const EdgeIcon = () => (
  <svg width="24" height="24" viewBox="0 0 24 24">
    <defs>
      <linearGradient id="edgeTop" x1="0" y1="0" x2="1" y2=".3"><stop offset="0" stopColor="#2aa7e0" /><stop offset="1" stopColor="#5fdc6a" /></linearGradient>
      <linearGradient id="edgeLow" x1="0" y1="0" x2="0" y2="1"><stop offset="0" stopColor="#1a8fe0" /><stop offset="1" stopColor="#0c59a4" /></linearGradient>
    </defs>
    <path d="M0 12C0 5 5.500 0 12 0s12 5 12 10.500c0 4-3 6-6 6-4 0-4.500-1.500-3.300-3C16 10 13 6.500 8.500 6.500 4 6.500 1 9 0 12Z" fill="url(#edgeTop)" />
    <path d="M0 12c1-4 4-6 8.500-6 3.500 0 6.500 2.500 6.500 5-.5-1-2-1.500-3-1.500-3 .5-4 4-2.500 7 1.700 3.500 7.500 5 12.500 1.500-2 4-6 6-10 6C5.500 24 0 19 0 12Z" fill="url(#edgeLow)" />
    <path d="M9.500 10.500C5 13 5.500 21.500 12 24c5 0 8.500-3 10-6-5 3.500-10.800 2-12.500-1.500-.9-2-.9-4 0-6Z" fill="#124f9c" />
  </svg>
);

const StoreIcon = () => (
  <svg width="24" height="24" viewBox="0 0 24 24">
    <path d="M7 6V1.500h10V6" fill="none" stroke="#2bb0f0" strokeWidth="2" />
    <path d="M1 5h22v15a3 3 0 0 1-3 3H4a3 3 0 0 1-3-3Z" fill="#f4f4f4" />
    <path d="M7.500 9H11.500v4h-4Z" fill="#f25022" /><path d="M12.500 9h4v4h-4Z" fill="#7fba00" />
    <path d="M7.500 14H11.500v4h-4Z" fill="#00a4ef" /><path d="M12.500 14h4v4h-4Z" fill="#ffb900" />
  </svg>
);

const FolderIcon = () => (
  <svg width="22" height="20" viewBox="0 0 22 20">
    <path d="M0 1h8l2 2h12v16H0Z" fill="#fcd462" /><path d="M0 0h8.500l1.500 3H0Z" fill="#e8a317" />
    <path d="M4 12a2 2 0 0 1 2-2h10a2 2 0 0 1 2 2v8h-3v-4H7v4H4Z" fill="#3d8fd4" />
  </svg>
);

const MailIcon = () => (
  <svg width="24" height="22" viewBox="0 0 24 22">
    <path d="M0 8 12 0l12 8v14H0Z" fill="#0f5fae" /><path d="M3 7h18v8H3Z" fill="#fff" />
    <path d="M0 7.500 12 15 0 22Z" fill="#1788dc" /><path d="M24 7.500 0 22h24Z" fill="#35b8f1" />
  </svg>
);

const CodeIcon = () => (
  <svg width="24" height="24" viewBox="0 0 24 24">
    <path d="M17 0 24 3v18l-7 3Z" fill="#2ba5f0" />
    <path d="M17 0v7L2.500 18.500 0 16.500Z" fill="#0a79c8" /><path d="M17 24v-7L2.500 5.500 0 7.500Z" fill="#128bd9" />
  </svg>
);

const ChromeIcon = () => (
  <svg width="22" height="22" viewBox="0 0 22 22">
    <path d="M11 11 1.500 5.500A11 11 0 0 1 20.500 5.500Z" fill="#e33b2e" />
    <path d="M11 11 1.500 5.500A11 11 0 0 0 11 22l4.500-8.500Z" fill="#2da94f" />
    <path d="M11 11 15 14 11 22A11 11 0 0 0 20.500 5.500H11Z" fill="#fcc934" />
    <circle cx="11" cy="11" r="5.200" fill="#fff" /><circle cx="11" cy="11" r="4.100" fill="#3b7ded" />
  </svg>
);

const Notifications = () => (
  <svg width="26" height="26" viewBox="0 0 26 26" style={{ marginLeft: 7 }}>
    <path d="M0 4h16v12H6l-3 3v-3H0Z" fill="#fff" /><path d="M3 7.500h10M3 10h10M3 12.500h7" stroke="#1b2a42" />
    <circle cx="15.500" cy="19" r="7.600" fill="#3a3d42" stroke="#777b82" />
    <text x="15.500" y="23" textAnchor="middle" fontSize="11" fontWeight="600" fill="#fff">3</text>
  </svg>
);

const BottomBar = () => (
  <Taskbar>
    <StartButton>
      <svg width="16" height="16" viewBox="0 0 16 16" fill="#fff"><path d="M0 2.300 6.500 1.400v6.100H0ZM7.500 1.200 16 0v7.500H7.500ZM0 8.500h6.500v6.100L0 13.700ZM7.500 8.500H16V16l-8.500-1.200Z" /></svg>
    </StartButton>
    <SearchBox>
      <svg width="17" height="17" viewBox="0 0 17 17"><circle cx="10.500" cy="6" r="5" fill="none" stroke="#222" strokeWidth="1.300" /><path d="m7 9.500-6 6.300" stroke="#222" strokeWidth="1.300" /></svg>
      Type here to search
    </SearchBox>
    <TaskButton><svg width="16" height="16" viewBox="0 0 16 16"><circle cx="8" cy="8" r="6.800" fill="none" stroke="#fff" strokeWidth="2" /></svg></TaskButton>
    <TaskButton><svg width="17" height="16" viewBox="0 0 17 16"><path d="M.5 0v2.500h11V0M.5 16v-2.500h11V16M.5 5h11v6H.5ZM15.500 0v3M15.500 8v8M14 5.500h3" fill="none" stroke="#fff" /></svg></TaskButton>
    <TaskButton><EdgeIcon /></TaskButton>
    <TaskButton><StoreIcon /></TaskButton>
    <TaskButton $open><FolderIcon /></TaskButton>
    <TaskButton><MailIcon /></TaskButton>
    <TaskButton $open><CodeIcon /></TaskButton>
    <TaskButton $open $current><ChromeIcon /></TaskButton>
    <Tray>
      <svg width="19" height="19" viewBox="0 0 19 19"><defs><linearGradient id="sun" x1="0" y1="0" x2="1" y2="1"><stop offset="0" stopColor="#ffe37a" /><stop offset="1" stopColor="#ff9a0a" /></linearGradient></defs><circle cx="9.500" cy="9.500" r="9.300" fill="url(#sun)" /></svg>
      <Weather>36°C  Sunny</Weather>
      <svg width="12" height="8" viewBox="0 0 12 8"><path d="m.5 7 5.500-5.500L11.500 7" fill="none" stroke="#fff" strokeWidth="1.200" /></svg>
      <svg width="12" height="16" viewBox="0 0 12 16" style={{ marginLeft: 13 }}><path d="M1 4.500h7v7H1ZM8 7l3-2v6L8 9M2 2c2-1.500 4-1.500 6 0M2 14c2 1.500 4 1.500 6 0" fill="none" stroke="#fff" strokeWidth="1.100" /></svg>
      <svg width="16" height="14" viewBox="0 0 16 14" style={{ marginLeft: 10, marginRight: 8 }}><path d="M1 5h2.500L7 1.500v11L3.500 9H1ZM10 5l4 4m0-4-4 4" fill="none" stroke="#fff" strokeWidth="1.100" /></svg>
      <TrayStack $w={28}>ENG<br />US</TrayStack>
      <TrayStack $w={73}>11:46 AM<br />5/4/2022</TrayStack>
      <Notifications />
      <ShowDesktop />
    </Tray>
  </Taskbar>
);

export default function App() {
  return (
    <Screen>
      <GlobalStyle />
      <Browser />
      <Viewport>
        <SitePage />
        <Scrollbar>
          <Arrow />
          <Thumb />
          <Arrow $down />
        </Scrollbar>
      </Viewport>
      <BottomBar />
    </Screen>
  );
}
